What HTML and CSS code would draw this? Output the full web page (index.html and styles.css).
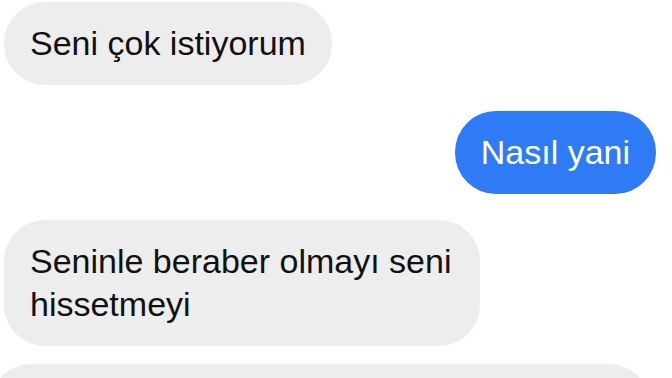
FILE: index.html
```html
<!DOCTYPE html>
<html lang="tr">

<head>
<meta charset="UTF-8" />
<meta name="viewport" content="width=device-width, initial-scale=1.0" />
<title>Sohbet</title>
<link rel="stylesheet" href="styles.css">
</head>

<body>
<div class="chat">
<div class="msg them">Seni çok istiyorum</div>
<div class="msg me">Nasıl yani</div>
<div class="msg them">Seninle beraber olmayı seni hissetmeyi</div>
<div class="msg them wide"></div>
</div>
</body>

</html>
```

FILE: styles.css
```css
* {
margin: 0;
padding: 0;
box-sizing: border-box;
}

body {
background: #ffffff;
font-family: "Liberation Sans", Arial, sans-serif;
overflow: hidden;
}

.chat {
display: flex;
flex-direction: column;
align-items: flex-start;
gap: 26px;
padding: 2px 16px 0 4px;
}

.msg {
max-width: 476px;
padding: 20px 26px;
border-radius: 41px;
font-size: 34px;
line-height: 43px;
}

.them {
background-color: #ededed;
color: #111111;
}

.me {
align-self: flex-end;
background-color: #2f7bf5;
color: #ffffff;
}

/* next long message, mostly below the fold */
.wide {
max-width: none;
width: 660px;
height: 90px;
margin-top: -8px;
margin-left: -14px;
}
```
